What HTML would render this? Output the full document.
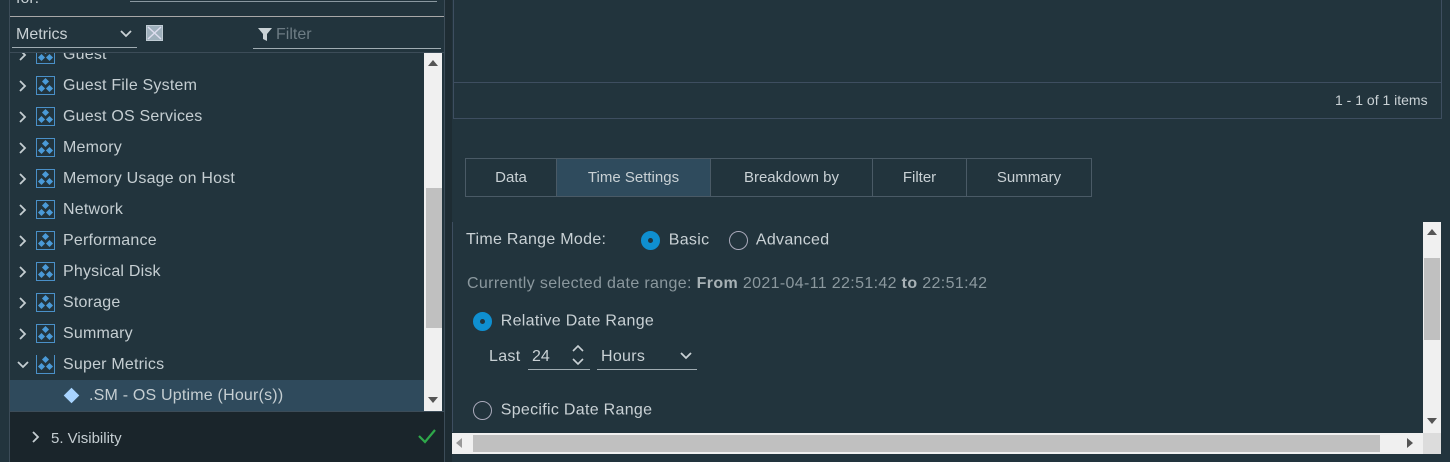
<!DOCTYPE html>
<html><head><style>
*{margin:0;padding:0;box-sizing:border-box}
body{width:1450px;height:462px;background:#22343d;font-family:"Liberation Sans",sans-serif;color:#c9d1d5;position:relative;overflow:hidden;font-size:16px}
.a{position:absolute}
.row{position:absolute;left:18px;height:31px;display:flex;align-items:center;font-size:16px;color:#c5ced2;white-space:nowrap;letter-spacing:.2px}
.chev{width:10px;height:14px;margin-right:8px}
.ic{width:19px;height:19px;border:1.5px solid #4a90c8;margin-right:8px;position:relative}
.ic i{position:absolute;width:5px;height:5px;background:#4a9ad8;transform:rotate(45deg)}
.tab{position:absolute;top:158px;height:39px;border:1px solid #4a5a66;display:flex;align-items:center;justify-content:center;font-size:15px;color:#c9d1d5}
.rad{display:inline-block;width:19px;height:19px;border-radius:50%;border:1.5px solid #aab;vertical-align:middle;position:relative;margin-right:4px}
.rad.on{background:#0f8fd0;border-color:#0f8fd0}
.rad.on:after{content:"";position:absolute;left:6px;top:6px;width:5px;height:5px;border-radius:50%;background:#22343d}
.r{letter-spacing:.3px}
</style></head><body>
<div class="a" style="left:9px;top:0;width:1px;height:462px;background:#3c4c58"></div>
<div class="a" style="left:444px;top:0;width:1px;height:462px;background:#3c4c58"></div>
<div class="a" style="left:445px;top:0;width:7px;height:462px;background:#1e2c33"></div>
<div class="a" style="left:16px;top:-10px;font-size:16px;color:#c5ced2">for:</div>
<div class="a" style="left:130px;top:1px;width:307px;height:1px;background:#8a98a0"></div>
<div class="a" style="left:10px;top:16px;width:434px;height:1px;background:#a8a8a8"></div>
<div class="a" style="left:16px;top:26px;font-size:16px;color:#c9d1d5">Metrics</div>
<svg class="a" style="left:119px;top:29px" width="14" height="10"><path d="M2 2l5 5 5-5" stroke="#c9d1d5" stroke-width="1.8" fill="none"/></svg>
<div class="a" style="left:12px;top:47px;width:125px;height:1px;background:#a0acb2"></div>
<div class="a" style="left:146px;top:25px;width:17px;height:16px;background:#9fb0bc;border:1px solid #c0ccd4"><svg width="15" height="14"><path d="M1 1l13 12M14 1L1 13" stroke="#dde" stroke-width="1.5"/></svg></div>
<svg class="a" style="left:257px;top:27px" width="16" height="15"><path d="M1 1h14l-5 6v7l-4-2V7z" fill="#c9d1d5"/></svg>
<div class="a" style="left:276px;top:26px;color:#6d7c84">Filter</div>
<div class="a" style="left:253px;top:48px;width:188px;height:1px;background:#a0acb2"></div>
<div class="a" style="left:10px;top:52px;width:434px;height:1px;background:#3c4c58"></div>
<div class="a" style="left:10px;top:53px;width:414px;height:358px;overflow:hidden">
<div class="row" style="top:-14px;left:8px"><svg class="chev" viewBox="0 0 10 14"><path d="M2 2l5 5-5 5" stroke="#c5ced2" stroke-width="1.8" fill="none"/></svg><span class="ic"><i style="left:6px;top:2px"></i><i style="left:2px;top:9px"></i><i style="left:10px;top:9px"></i></span>Guest</div>
<div class="row" style="top:17px;left:8px"><svg class="chev" viewBox="0 0 10 14"><path d="M2 2l5 5-5 5" stroke="#c5ced2" stroke-width="1.8" fill="none"/></svg><span class="ic"><i style="left:6px;top:2px"></i><i style="left:2px;top:9px"></i><i style="left:10px;top:9px"></i></span>Guest File System</div>
<div class="row" style="top:48px;left:8px"><svg class="chev" viewBox="0 0 10 14"><path d="M2 2l5 5-5 5" stroke="#c5ced2" stroke-width="1.8" fill="none"/></svg><span class="ic"><i style="left:6px;top:2px"></i><i style="left:2px;top:9px"></i><i style="left:10px;top:9px"></i></span>Guest OS Services</div>
<div class="row" style="top:79px;left:8px"><svg class="chev" viewBox="0 0 10 14"><path d="M2 2l5 5-5 5" stroke="#c5ced2" stroke-width="1.8" fill="none"/></svg><span class="ic"><i style="left:6px;top:2px"></i><i style="left:2px;top:9px"></i><i style="left:10px;top:9px"></i></span>Memory</div>
<div class="row" style="top:110px;left:8px"><svg class="chev" viewBox="0 0 10 14"><path d="M2 2l5 5-5 5" stroke="#c5ced2" stroke-width="1.8" fill="none"/></svg><span class="ic"><i style="left:6px;top:2px"></i><i style="left:2px;top:9px"></i><i style="left:10px;top:9px"></i></span>Memory Usage on Host</div>
<div class="row" style="top:141px;left:8px"><svg class="chev" viewBox="0 0 10 14"><path d="M2 2l5 5-5 5" stroke="#c5ced2" stroke-width="1.8" fill="none"/></svg><span class="ic"><i style="left:6px;top:2px"></i><i style="left:2px;top:9px"></i><i style="left:10px;top:9px"></i></span>Network</div>
<div class="row" style="top:172px;left:8px"><svg class="chev" viewBox="0 0 10 14"><path d="M2 2l5 5-5 5" stroke="#c5ced2" stroke-width="1.8" fill="none"/></svg><span class="ic"><i style="left:6px;top:2px"></i><i style="left:2px;top:9px"></i><i style="left:10px;top:9px"></i></span>Performance</div>
<div class="row" style="top:203px;left:8px"><svg class="chev" viewBox="0 0 10 14"><path d="M2 2l5 5-5 5" stroke="#c5ced2" stroke-width="1.8" fill="none"/></svg><span class="ic"><i style="left:6px;top:2px"></i><i style="left:2px;top:9px"></i><i style="left:10px;top:9px"></i></span>Physical Disk</div>
<div class="row" style="top:234px;left:8px"><svg class="chev" viewBox="0 0 10 14"><path d="M2 2l5 5-5 5" stroke="#c5ced2" stroke-width="1.8" fill="none"/></svg><span class="ic"><i style="left:6px;top:2px"></i><i style="left:2px;top:9px"></i><i style="left:10px;top:9px"></i></span>Storage</div>
<div class="row" style="top:265px;left:8px"><svg class="chev" viewBox="0 0 10 14"><path d="M2 2l5 5-5 5" stroke="#c5ced2" stroke-width="1.8" fill="none"/></svg><span class="ic"><i style="left:6px;top:2px"></i><i style="left:2px;top:9px"></i><i style="left:10px;top:9px"></i></span>Summary</div>
<div class="row" style="top:296px;left:6px"><svg style="width:14px;height:10px;margin-right:6px" viewBox="0 0 14 10"><path d="M2 2l5 5 5-5" stroke="#c5ced2" stroke-width="1.8" fill="none"/></svg><span class="ic" style="border-top:none;border-color:#4a90c8"><i style="left:6px;top:2px"></i><i style="left:2px;top:9px"></i><i style="left:10px;top:9px"></i></span>Super Metrics</div>
<div class="a" style="left:0;top:327px;width:414px;height:31px;background:#2f4a5c"></div>
<div class="row" style="top:327px;left:56px"><span style="display:inline-block;width:11px;height:11px;background:#a8d4ff;transform:rotate(45deg);margin-right:12px"></span>.SM - OS Uptime (Hour(s))</div>
</div>
<div class="a" style="left:424px;top:53px;width:18px;height:358px;background:#f0f0f0"></div>
<div class="a" style="left:426px;top:188px;width:16px;height:140px;background:#c0c0c0"></div>
<svg class="a" style="left:428px;top:60px" width="10" height="6"><path d="M0 6L5 0l5 6z" fill="#555"/></svg>
<svg class="a" style="left:428px;top:397px" width="10" height="6"><path d="M0 0l5 6 5-6z" fill="#555"/></svg>
<div class="a" style="left:10px;top:411px;width:434px;height:51px;background:#1a252b;border-top:1px solid #3c4c58"></div>
<svg class="a" style="left:32px;top:431px" width="8" height="12"><path d="M1 1l5 5-5 5" stroke="#c5ced2" stroke-width="1.8" fill="none"/></svg>
<div class="a" style="left:51px;top:430px;font-size:15px;color:#c5ced2">5. Visibility</div>
<svg class="a" style="left:417px;top:428px" width="20" height="16"><path d="M2 8l6 6L18 2" stroke="#2ea84a" stroke-width="2.2" fill="none"/></svg>
<div class="a" style="left:453px;top:-1px;width:989px;height:120px;border:1px solid #3e4e60"></div>
<div class="a" style="left:453px;top:82px;width:989px;height:1px;background:#3e4e60"></div>
<div class="a" style="left:1335px;top:92px;font-size:14px;color:#c9d1d5">1 - 1 of 1 items</div>
<div class="tab" style="left:465px;width:92px">Data</div>
<div class="tab" style="left:556px;width:155px;background:#2f4b5d">Time Settings</div>
<div class="tab" style="left:710px;width:163px">Breakdown by</div>
<div class="tab" style="left:872px;width:95px">Filter</div>
<div class="tab" style="left:966px;width:126px">Summary</div>
<div class="a" style="left:452px;top:222px;width:1px;height:210px;background:#3e4e60"></div>
<div class="a r" style="left:466px;top:231px;font-size:16px">Time Range Mode:</div>
<div class="a r" style="left:641px;top:231px;font-size:16px"><span class="rad on"></span> Basic</div>
<div class="a r" style="left:729px;top:231px;font-size:16px"><span class="rad"></span> Advanced</div>
<div class="a" style="left:467px;top:275px;font-size:16px;letter-spacing:.35px;color:#8b989e">Currently selected date range: <b style="color:#a8b2b6">From</b> 2021-04-11 22:51:42 <b style="color:#a8b2b6">to</b> 22:51:42</div>
<div class="a r" style="left:473px;top:312px;font-size:16px"><span class="rad on"></span> Relative Date Range</div>
<div class="a r" style="left:489px;top:348px;font-size:16px">Last</div>
<div class="a" style="left:532px;top:348px;font-size:16px">24</div>
<svg class="a" style="left:571px;top:344px" width="14" height="22"><path d="M2 7l5-5 5 5M2 15l5 5 5-5" stroke="#c9d1d5" stroke-width="1.6" fill="none"/></svg>
<div class="a" style="left:528px;top:369px;width:62px;height:1px;background:#a0acb2"></div>
<div class="a r" style="left:601px;top:348px;font-size:16px">Hours</div>
<svg class="a" style="left:679px;top:351px" width="14" height="10"><path d="M2 2l5 5 5-5" stroke="#c9d1d5" stroke-width="1.8" fill="none"/></svg>
<div class="a" style="left:597px;top:369px;width:100px;height:1px;background:#a0acb2"></div>
<div class="a r" style="left:473px;top:401px;font-size:16px"><span class="rad"></span> Specific Date Range</div>
<div class="a" style="left:1423px;top:222px;width:18px;height:211px;background:#f0f0f0"></div>
<div class="a" style="left:1424px;top:258px;width:16px;height:82px;background:#c0c0c0"></div>
<svg class="a" style="left:1427px;top:229px" width="10" height="6"><path d="M0 6L5 0l5 6z" fill="#555"/></svg>
<svg class="a" style="left:1427px;top:418px" width="10" height="6"><path d="M0 0l5 6 5-6z" fill="#555"/></svg>
<div class="a" style="left:452px;top:433px;width:971px;height:21px;background:#f0f0f0"></div>
<div class="a" style="left:1423px;top:433px;width:18px;height:21px;background:#dcdcdc"></div>
<div class="a" style="left:473px;top:435px;width:907px;height:17px;background:#c0c0c0"></div>
<svg class="a" style="left:456px;top:438px" width="6" height="10"><path d="M6 0L0 5l6 5z" fill="#999"/></svg>
<svg class="a" style="left:1407px;top:438px" width="6" height="10"><path d="M0 0l6 5-6 5z" fill="#555"/></svg>
</body></html>
